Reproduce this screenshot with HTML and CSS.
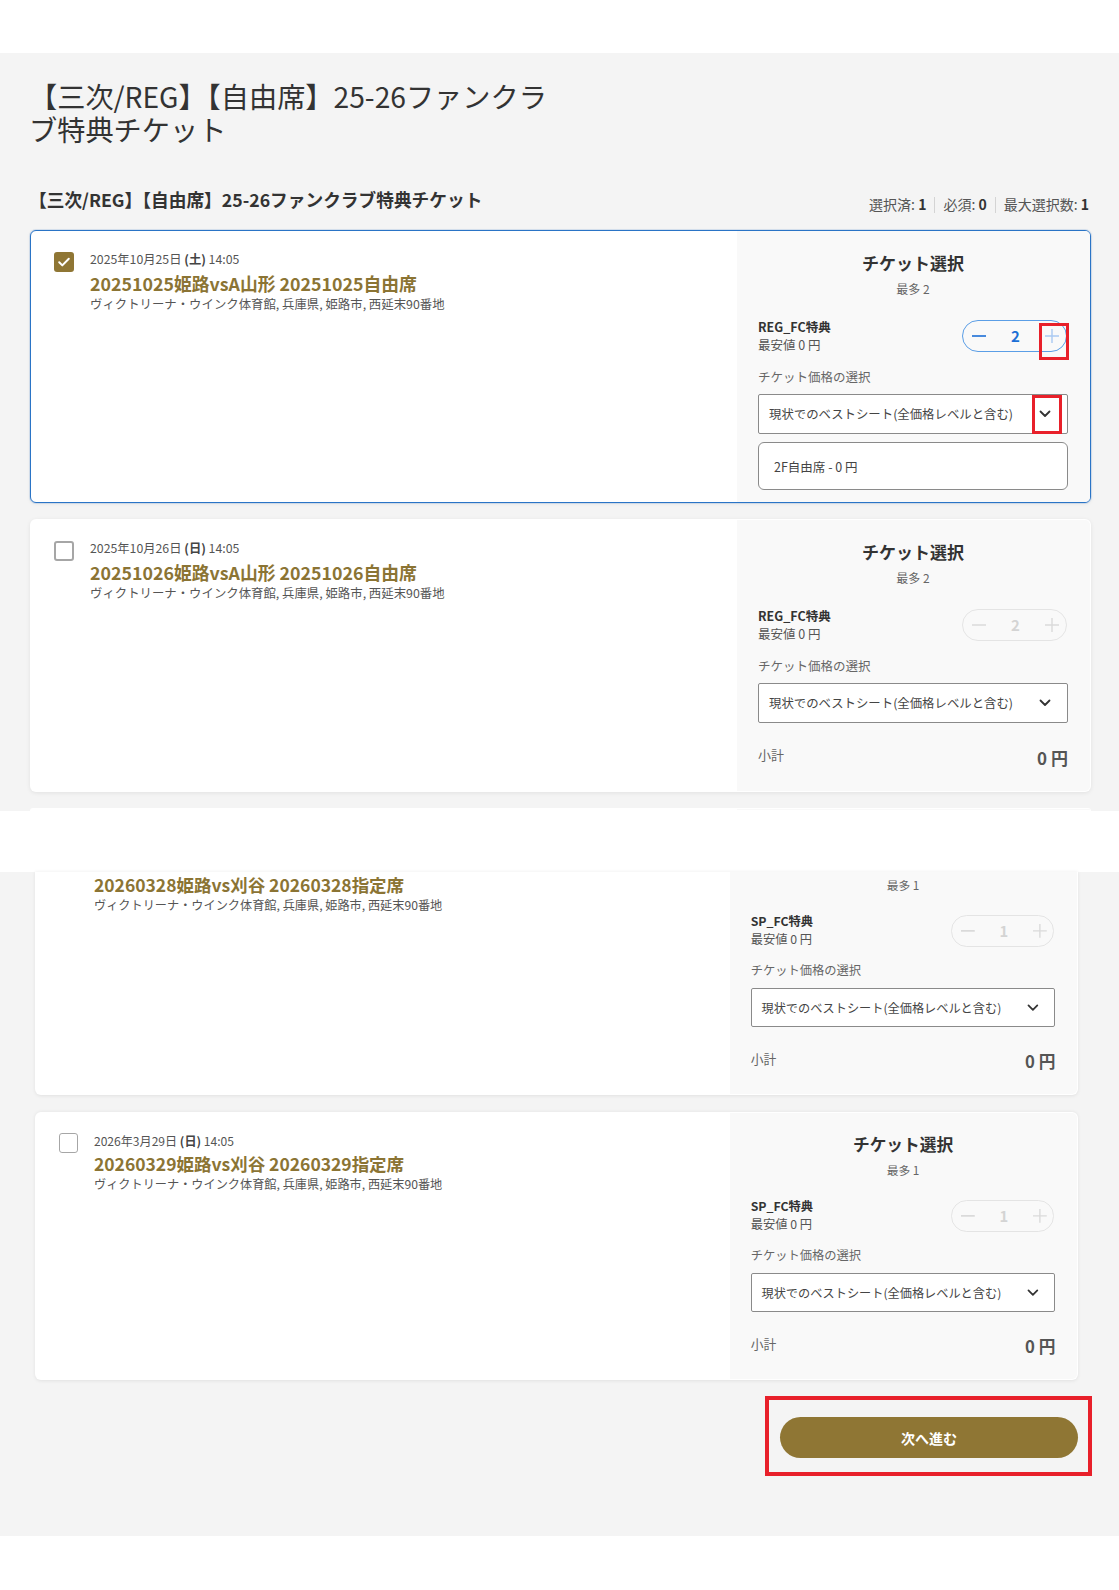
FILE: index.html
```html
<!DOCTYPE html>
<html lang="ja">
<head>
<meta charset="utf-8">
<title>【三次/REG】【自由席】25-26ファンクラブ特典チケット</title>
<link rel="stylesheet" href="styles.css">
</head>
<body>
<div class="topbar"></div>

<main class="page page--upper">
  <h1 class="event-title">【三次/REG】【自由席】25-26ファンクラブ特典チケット</h1>
  <div class="section-head">
    <h2 class="section-title">【三次/REG】【自由席】25-26ファンクラブ特典チケット</h2>
    <div class="counts">
      <span>選択済: <b>1</b></span><span class="sep"></span>
      <span>必須: <b>0</b></span><span class="sep"></span>
      <span>最大選択数: <b>1</b></span>
    </div>
  </div>

  <div class="card-list">
    <article class="card card--selected">
      <div class="card-main">
        <span class="checkbox checkbox--checked">
          <svg viewBox="0 0 20 20" width="20" height="20"><path d="M5.2 10.3l3.1 3.1 6.5-6.6" fill="none" stroke="#fff" stroke-width="2" stroke-linecap="round" stroke-linejoin="round"/></svg>
        </span>
        <div class="event-info">
          <div class="event-date">2025年10月25日 <b>(土)</b> 14:05</div>
          <div class="event-name">20251025姫路vsA山形 20251025自由席</div>
          <div class="event-venue">ヴィクトリーナ・ウインク体育館, 兵庫県, 姫路市, 西延末90番地</div>
        </div>
      </div>
      <div class="card-panel">
        <div class="panel-title">チケット選択</div>
        <div class="panel-max">最多 2</div>
        <div class="ticket-row">
          <div class="ticket-type">
            <div class="ticket-name">REG_FC特典</div>
            <div class="ticket-min">最安値 0 円</div>
          </div>
          <div class="stepper stepper--active">
            <span class="step-btn step-btn--minus"><svg viewBox="0 0 14 14" width="14" height="14"><path d="M0 7h14" stroke="currentColor" stroke-width="1.6"/></svg></span>
            <span class="step-value">2</span>
            <span class="step-btn step-btn--plus"><svg viewBox="0 0 14 14" width="14" height="14"><path d="M0 7h14M7 0v14" stroke="currentColor" stroke-width="1.4"/></svg></span>
            <span class="mark mark--plus"></span>
          </div>
        </div>
        <div class="field-label">チケット価格の選択</div>
        <div class="select">
          <span>現状でのベストシート(全価格レベルと含む)</span>
          <svg class="chev" viewBox="0 0 12 8" width="12" height="8"><path d="M1.5 1.5L6 6l4.5-4.5" fill="none" stroke="#333" stroke-width="1.8" stroke-linecap="round" stroke-linejoin="round"/></svg>
          <span class="mark mark--chev"></span>
        </div>
        <div class="option-box">2F自由席 - 0 円</div>
      </div>
    </article>

    <article class="card">
      <div class="card-main">
        <span class="checkbox"></span>
        <div class="event-info">
          <div class="event-date">2025年10月26日 <b>(日)</b> 14:05</div>
          <div class="event-name">20251026姫路vsA山形 20251026自由席</div>
          <div class="event-venue">ヴィクトリーナ・ウインク体育館, 兵庫県, 姫路市, 西延末90番地</div>
        </div>
      </div>
      <div class="card-panel">
        <div class="panel-title">チケット選択</div>
        <div class="panel-max">最多 2</div>
        <div class="ticket-row">
          <div class="ticket-type">
            <div class="ticket-name">REG_FC特典</div>
            <div class="ticket-min">最安値 0 円</div>
          </div>
          <div class="stepper">
            <span class="step-btn"><svg viewBox="0 0 14 14" width="14" height="14"><path d="M0 7h14" stroke="currentColor" stroke-width="1.6"/></svg></span>
            <span class="step-value">2</span>
            <span class="step-btn"><svg viewBox="0 0 14 14" width="14" height="14"><path d="M0 7h14M7 0v14" stroke="currentColor" stroke-width="1.4"/></svg></span>
          </div>
        </div>
        <div class="field-label">チケット価格の選択</div>
        <div class="select">
          <span>現状でのベストシート(全価格レベルと含む)</span>
          <svg class="chev" viewBox="0 0 12 8" width="12" height="8"><path d="M1.5 1.5L6 6l4.5-4.5" fill="none" stroke="#333" stroke-width="1.8" stroke-linecap="round" stroke-linejoin="round"/></svg>
        </div>
        <div class="subtotal">
          <span class="subtotal-label">小計</span>
          <span class="subtotal-value">0 円</span>
        </div>
      </div>
    </article>

    <div class="card card--peek">
      <div class="card-main"></div>
      <div class="card-panel"></div>
    </div>
  </div>
</main>

<div class="stitch-gap"></div>

<section class="page page--lower">
  <div class="lower-cards">
    <div class="clip">
      <article class="card card--continued">
        <div class="card-main">
          <span class="checkbox checkbox--spacer"></span>
          <div class="event-info">
            <div class="event-name">20260328姫路vs刈谷 20260328指定席</div>
            <div class="event-venue">ヴィクトリーナ・ウインク体育館, 兵庫県, 姫路市, 西延末90番地</div>
          </div>
        </div>
        <div class="card-panel">
          <div class="panel-max">最多 1</div>
          <div class="ticket-row">
            <div class="ticket-type">
              <div class="ticket-name">SP_FC特典</div>
              <div class="ticket-min">最安値 0 円</div>
            </div>
            <div class="stepper">
              <span class="step-btn"><svg viewBox="0 0 14 14" width="14" height="14"><path d="M0 7h14" stroke="currentColor" stroke-width="1.6"/></svg></span>
              <span class="step-value">1</span>
              <span class="step-btn"><svg viewBox="0 0 14 14" width="14" height="14"><path d="M0 7h14M7 0v14" stroke="currentColor" stroke-width="1.4"/></svg></span>
            </div>
          </div>
          <div class="field-label">チケット価格の選択</div>
          <div class="select">
            <span>現状でのベストシート(全価格レベルと含む)</span>
            <svg class="chev" viewBox="0 0 12 8" width="12" height="8"><path d="M1.5 1.5L6 6l4.5-4.5" fill="none" stroke="#333" stroke-width="1.8" stroke-linecap="round" stroke-linejoin="round"/></svg>
          </div>
          <div class="subtotal">
            <span class="subtotal-label">小計</span>
            <span class="subtotal-value">0 円</span>
          </div>
        </div>
      </article>
    </div>

    <article class="card card--next">
      <div class="card-main">
        <span class="checkbox"></span>
        <div class="event-info">
          <div class="event-date">2026年3月29日 <b>(日)</b> 14:05</div>
          <div class="event-name">20260329姫路vs刈谷 20260329指定席</div>
          <div class="event-venue">ヴィクトリーナ・ウインク体育館, 兵庫県, 姫路市, 西延末90番地</div>
        </div>
      </div>
      <div class="card-panel">
        <div class="panel-title">チケット選択</div>
        <div class="panel-max">最多 1</div>
        <div class="ticket-row">
          <div class="ticket-type">
            <div class="ticket-name">SP_FC特典</div>
            <div class="ticket-min">最安値 0 円</div>
          </div>
          <div class="stepper">
            <span class="step-btn"><svg viewBox="0 0 14 14" width="14" height="14"><path d="M0 7h14" stroke="currentColor" stroke-width="1.6"/></svg></span>
            <span class="step-value">1</span>
            <span class="step-btn"><svg viewBox="0 0 14 14" width="14" height="14"><path d="M0 7h14M7 0v14" stroke="currentColor" stroke-width="1.4"/></svg></span>
          </div>
        </div>
        <div class="field-label">チケット価格の選択</div>
        <div class="select">
          <span>現状でのベストシート(全価格レベルと含む)</span>
          <svg class="chev" viewBox="0 0 12 8" width="12" height="8"><path d="M1.5 1.5L6 6l4.5-4.5" fill="none" stroke="#333" stroke-width="1.8" stroke-linecap="round" stroke-linejoin="round"/></svg>
        </div>
        <div class="subtotal">
          <span class="subtotal-label">小計</span>
          <span class="subtotal-value">0 円</span>
        </div>
      </div>
    </article>
  </div>

  <div class="actions">
    <div class="highlight">
      <button class="btn-next" type="button">次へ進む</button>
    </div>
  </div>
</section>
</body>
</html>
```

FILE: styles.css
```css
* { box-sizing: border-box; }

body {
  margin: 0;
  background: #fff;
  color: #333;
  font-family: "Noto Sans CJK JP", "Noto Sans", sans-serif;
}

.topbar { height: 53px; background: #fff; }

.page { background: #f4f4f4; }

.page--upper { padding: 26px 28px 0 29px; }

.event-title {
  margin: 0;
  max-width: 535px;
  font-size: 28.2px;
  line-height: 33px;
  font-weight: 400;
  color: #333;
}

.section-head {
  margin-top: 42px;
  display: flex;
  justify-content: space-between;
  align-items: flex-start;
}

.section-title {
  margin: 0;
  font-size: 17.7px;
  line-height: 24px;
  font-weight: 700;
  color: #333;
}

.counts {
  margin-top: 7px;
  margin-right: 2px;
  display: flex;
  align-items: center;
  font-size: 14px;
  line-height: 21px;
  color: #555;
}
.counts b { color: #333; font-weight: 700; }
.counts .sep {
  width: 1px;
  height: 16px;
  margin: 0 8px;
  background: #d4d4d4;
}

.card-list {
  margin-top: 15px;
  margin-left: 1px;
  display: flex;
  flex-direction: column;
  gap: 16px;
}

/* card */
.card {
  display: flex;
  background: #fff;
  border: 1px solid transparent;
  border-radius: 6px;
  overflow: hidden;
  box-shadow: 0 1px 4px rgba(0, 0, 0, 0.08);
}
.card--selected {
  border-color: #2a74c6;
  box-shadow: 0 0 0 1px rgba(42, 116, 198, 0.15), 0 1px 4px rgba(0, 0, 0, 0.06);
}
.card--peek {
  height: 3px;
  border-bottom-left-radius: 0;
  border-bottom-right-radius: 0;
  box-shadow: none;
}

.card-main {
  flex: 1;
  display: flex;
  gap: 16px;
  padding: 19px 23px;
  align-items: flex-start;
}

.checkbox {
  flex: 0 0 20px;
  width: 20px;
  height: 20px;
  margin-top: 2px;
  border: 2px solid #a6a6a6;
  border-radius: 3px;
  background: #fff;
  display: block;
}
.checkbox--checked {
  border: none;
  background: #8f7634;
}
.checkbox svg { display: block; }
.checkbox--spacer { visibility: hidden; }

.event-date {
  font-size: 12.3px;
  line-height: 18px;
  color: #555;
}
.event-date b { font-weight: 700; color: #444; }

.event-name {
  margin-top: 2px;
  font-size: 17.8px;
  line-height: 26px;
  font-weight: 700;
  color: #8b7434;
}

.event-venue {
  font-size: 12.4px;
  line-height: 16px;
  color: #555;
}

/* right panel */
.card-panel {
  flex: 0 0 353px;
  background: #f9f9f9;
  padding: 20px 22px 12px 21px;
}

.panel-title {
  text-align: center;
  font-size: 17px;
  line-height: 24px;
  font-weight: 700;
  color: #333;
}

.panel-max {
  margin-top: 5px;
  text-align: center;
  font-size: 12px;
  line-height: 18px;
  color: #666;
}

.ticket-row {
  margin-top: 20px;
  display: flex;
  justify-content: space-between;
  align-items: center;
}

.ticket-name {
  font-size: 12.5px;
  line-height: 18px;
  font-weight: 700;
  color: #333;
}
.ticket-min {
  font-size: 12.5px;
  line-height: 18px;
  color: #555;
}

.stepper {
  position: relative;
  width: 105px;
  height: 32px;
  margin-right: 1px;
  border: 1.5px solid #e4e4e4;
  border-radius: 16px;
  display: flex;
  align-items: center;
  justify-content: space-between;
  padding: 0 7px 0 9px;
  color: #dadada;
}
.step-btn { display: flex; width: 14px; height: 14px; }
.step-btn svg { display: block; }
.step-value {
  font-size: 15px;
  font-weight: 700;
  line-height: 20px;
  color: #d4d4d4;
}
.stepper--active {
  border-color: #5b9ee6;
}
.stepper--active .step-btn--minus { color: #1c6fd6; }
.stepper--active .step-value { color: #1c6fd6; }
.stepper--active .step-btn--plus { color: #a9c9f2; }

.mark {
  position: absolute;
  border: 3px solid #e8202a;
}
.mark--plus {
  left: 76px;
  top: 2px;
  width: 30px;
  height: 37px;
}

.field-label {
  margin-top: 14px;
  font-size: 12.5px;
  line-height: 18px;
  color: #666;
}

.select {
  position: relative;
  margin-top: 8px;
  height: 40px;
  border: 1px solid #8a8a8a;
  border-radius: 2px;
  background: #fff;
  display: flex;
  align-items: center;
  justify-content: space-between;
  padding: 0 16px 0 10px;
  font-size: 12.4px;
  color: #444;
}
.chev { display: block; }
.mark--chev {
  left: 273px;
  top: 0;
  width: 30px;
  height: 39px;
}

.option-box {
  margin-top: 8px;
  height: 48px;
  border: 1px solid #8a8a8a;
  border-radius: 6px;
  background: #fff;
  display: flex;
  align-items: center;
  padding-left: 15px;
  font-size: 12.5px;
  color: #444;
}

.subtotal {
  margin-top: 20px;
  margin-bottom: 6px;
  height: 30px;
  display: flex;
  justify-content: space-between;
  align-items: flex-start;
}
.subtotal-label {
  font-size: 13px;
  line-height: 24px;
  color: #666;
}
.subtotal-value {
  font-size: 17px;
  line-height: 30px;
  font-weight: 700;
  color: #555;
}

/* stitched lower screenshot */
.stitch-gap { height: 61px; background: #fff; }

.page--lower { padding-bottom: 60px; }

.lower-cards {
  zoom: 0.983;
  padding: 0 41.7px 0 35.6px;
}

.clip {
  height: 227px;
  display: flex;
  flex-direction: column;
}
.card--continued {
  flex: 1;
  border-top-left-radius: 0;
  border-top-right-radius: 0;
  border-top-width: 0;
}
.card--continued .card-main { padding-top: 0; }
.card--continued .event-name { margin-top: 0; }
.card--continued .event-venue { margin-top: 0; }
.card--continued .card-panel { padding-top: 4px; }
.card--continued .panel-max { margin-top: 0; }
.card--continued .checkbox--spacer { height: 0; margin: 0; border: 0; }

.card--next { margin-top: 17px; }

.actions {
  margin-top: 16px;
  display: flex;
  justify-content: flex-end;
  padding-right: 27px;
}

.highlight {
  border: 4px solid #e8202a;
  padding: 17px 10px 14px 11px;
}

.btn-next {
  display: block;
  width: 298px;
  height: 41px;
  border: none;
  border-radius: 21px;
  background: #8f7634;
  color: #fff;
  font-family: inherit;
  font-size: 14px;
  font-weight: 700;
  cursor: pointer;
}
```
